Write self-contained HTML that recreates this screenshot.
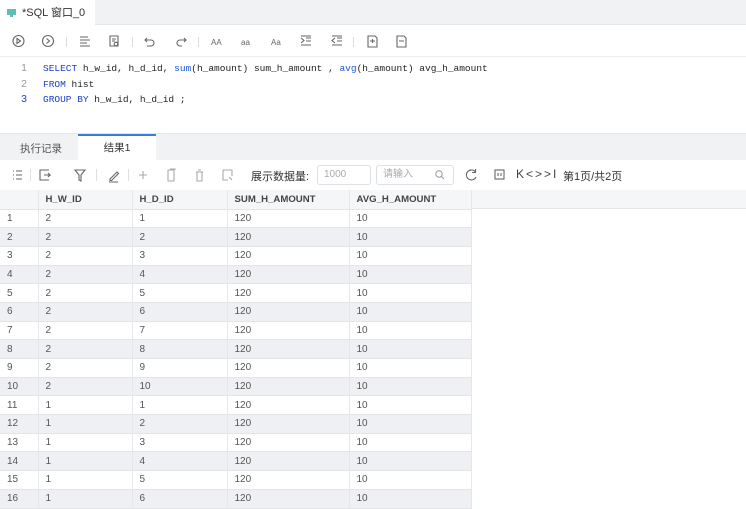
<!DOCTYPE html>
<html><head><meta charset="utf-8">
<style>
*{margin:0;padding:0;box-sizing:border-box}
body{width:746px;height:498px;overflow:hidden;background:#fff;font-family:"Liberation Sans","Noto Sans CJK SC",sans-serif;color:#333;position:relative}
.abs{position:absolute}
.topbar{left:0;top:0;width:746px;height:25px;background:#f1f2f4;border-bottom:1px solid #e6e7ea}
.tab0{left:0;top:0;width:95px;height:26px;background:#fff;font-size:11px;color:#333;line-height:26px;padding-left:22px}
.ico{stroke:#666;fill:none;stroke-width:1.1}
.sep{width:1px;height:10px;background:#ddd;top:37px}
.code{font-family:"Liberation Mono",monospace;font-size:9.5px;color:#222}
.ln{color:#999;font-family:"Liberation Sans",sans-serif;font-size:10.5px;display:inline-block;width:43px;text-align:right;padding-right:16px}
.kw{color:#1c3fcf}.fn{color:#1c55d8}
.panel{left:0;top:133px;width:746px;height:27px;background:#f1f2f4;border-top:1px solid #e3e4e7}
.t1{left:20px;top:141px;font-size:10.5px;color:#555}
.t2{left:78px;top:134px;width:78px;height:27px;background:#fff;border-top:2px solid #3a7be0;font-size:10.5px;color:#333;text-align:center;line-height:24px}
.rtb{top:161px;height:29px;width:746px;left:0;background:#fff}
table{position:absolute;left:0;top:190px;border-collapse:collapse;font-size:10px;color:#555}
td{height:18.7px;padding-left:7px;border-right:1px solid #e6e7ea;border-bottom:1px solid #e3e4e7;white-space:nowrap}
tr.h td{height:19px;background:#f5f6f8;font-weight:bold;color:#444;font-size:9.6px}
tr.g td{background:#eff0f3}
.hdrfill{left:471px;top:190px;width:275px;height:19px;background:#f5f6f8;border-bottom:1px solid #e3e4e7}
</style></head><body>
<div class="abs topbar"></div>
<div class="abs tab0">*SQL 窗口_0</div>
<svg class="abs" style="left:6px;top:8px" width="11" height="10"><rect x="1" y="1" width="9" height="6" fill="#5bbfb8"/><rect x="4" y="7" width="3" height="2" fill="#5bbfb8"/></svg>

<svg class="abs" style="left:0;top:30px" width="420" height="22">
<g class="ico">
<circle cx="18.5" cy="11" r="5.5"/><path d="M17 8.5 L20.5 11 L17 13.5 Z"/>
<circle cx="48" cy="11" r="5.5"/><path d="M46.5 8.5 L49.5 11 L46.5 13.5"/>
<path d="M80 7h8M80 10h10M80 13h7M80 16h10"/>
<path d="M110 6h8v10h-8z M112 9h4M112 11h3"/><circle cx="116" cy="14" r="1.8"/>
<path d="M147 8 L145 10 L147 12 M145 10 h6 a3 3 0 0 1 0 6 h-4"/>
<path d="M184 8 L186 10 L184 12 M186 10 h-6 a3 3 0 0 0 0 6 h2"/>
<path d="M301 8l3 2.5l-3 2.5 M306 8h5M306 11h5M301 15h10M301 6h10"/>
<path d="M335 8l-3 2.5l3 2.5 M337 8h5M337 11h5M332 15h10M332 6h10"/>
<path d="M368 6h7l2 2v9h-9z M370 11h5M372.5 9v4"/>
<path d="M397 6h7l2 2v9h-9z M399 11h5"/>
</g>
<g font-family="Liberation Sans" font-size="8" fill="#666">
<text x="211" y="15">AA</text><text x="241" y="15">aa</text><text x="271" y="15">Aa</text>
</g>
</svg>
<div class="abs sep" style="left:66px"></div>
<div class="abs sep" style="left:132px"></div>
<div class="abs sep" style="left:198px"></div>
<div class="abs sep" style="left:353px"></div>
<div class="abs" style="left:0;top:56px;width:746px;height:1px;background:#eceef0"></div>

<div class="abs code" style="left:0;top:61px;line-height:15.5px">
<div><span class="ln">1</span><span class="kw">SELECT</span>  h_w_id, h_d_id, <span class="fn">sum</span>(h_amount) sum_h_amount , <span class="fn">avg</span>(h_amount) avg_h_amount</div>
<div><span class="ln">2</span><span class="kw">FROM</span> hist</div>
<div><span class="ln" style="color:#1c3fcf">3</span><span class="kw">GROUP BY</span> h_w_id, h_d_id ;</div>
</div>

<div class="abs panel"></div>
<div class="abs t1">执行记录</div>
<div class="abs t2">结果1</div>

<div class="abs rtb"></div>
<svg class="abs" style="left:0;top:165px" width="240" height="20">
<g class="ico" stroke="#777">
<path d="M13 6h1M13 10h1M13 14h1M16 6h6M16 10h6M16 14h6"/>
<path d="M49 5h-9v10h9M44 10h6l-2-2M50 10l-2 2"/>
<path d="M75 5h10l-4 5v6l-2-1v-5z"/>
<path d="M110 14l7-7l1.5 1.5l-7 7h-1.5z M109 17h9"/>
<path d="M143 6v8M139 10h8" stroke="#aaa"/>
<path d="M168 5h6v11h-6z M170 4h5v1" stroke="#aaa"/>
<path d="M196 7h7M197 7v9h5v-9M198 5h3" stroke="#aaa"/>
<path d="M223 5h9v6M223 5v10h5 M229 12l3 3" stroke="#aaa"/>
</g>
<rect x="30" y="4" width="1" height="12" fill="#e0e0e0"/>
<rect x="96" y="4" width="1" height="12" fill="#e0e0e0"/>
<rect x="128" y="4" width="1" height="12" fill="#e0e0e0"/>
</svg>
<div class="abs" style="left:251px;top:168px;font-size:11px;color:#333">展示数据量:</div>
<div class="abs" style="left:317px;top:165px;width:54px;height:20px;border:1px solid #dcdfe6;border-radius:3px;font-size:10px;color:#aaa;line-height:18px;padding-left:6px">1000</div>
<div class="abs" style="left:376px;top:165px;width:78px;height:20px;border:1px solid #dcdfe6;border-radius:3px;font-size:10px;color:#aaa;line-height:18px;padding-left:6px">请输入</div>
<svg class="abs" style="left:434px;top:169px" width="12" height="12"><circle cx="5" cy="5" r="3.2" fill="none" stroke="#999"/><path d="M7.5 7.5l2.5 2.5" stroke="#999"/></svg>
<svg class="abs" style="left:463px;top:167px" width="60" height="16"><g fill="none" stroke="#666" stroke-width="1.1"><path d="M12.5 5a5 5 0 1 0 0.5 5 M12.5 2v3.5h-3.5"/><rect x="32" y="3" width="9" height="9"/><path d="M35 6v3M38 6v3"/></g></svg>
<div class="abs" style="left:516px;top:167px;font-size:12px;color:#444;letter-spacing:2px">K&lt;&gt;&gt;I</div>
<div class="abs" style="left:563px;top:168px;font-size:11px;color:#333">第1页/共2页</div>

<div class="abs hdrfill"></div>
<table>
<colgroup><col style="width:38px"><col style="width:94px"><col style="width:95px"><col style="width:122px"><col style="width:122px"></colgroup>
<tr class="h"><td></td><td>H_W_ID</td><td>H_D_ID</td><td>SUM_H_AMOUNT</td><td>AVG_H_AMOUNT</td></tr>
<tr><td>1</td><td>2</td><td>1</td><td>120</td><td>10</td></tr>
<tr class="g"><td>2</td><td>2</td><td>2</td><td>120</td><td>10</td></tr>
<tr><td>3</td><td>2</td><td>3</td><td>120</td><td>10</td></tr>
<tr class="g"><td>4</td><td>2</td><td>4</td><td>120</td><td>10</td></tr>
<tr><td>5</td><td>2</td><td>5</td><td>120</td><td>10</td></tr>
<tr class="g"><td>6</td><td>2</td><td>6</td><td>120</td><td>10</td></tr>
<tr><td>7</td><td>2</td><td>7</td><td>120</td><td>10</td></tr>
<tr class="g"><td>8</td><td>2</td><td>8</td><td>120</td><td>10</td></tr>
<tr><td>9</td><td>2</td><td>9</td><td>120</td><td>10</td></tr>
<tr class="g"><td>10</td><td>2</td><td>10</td><td>120</td><td>10</td></tr>
<tr><td>11</td><td>1</td><td>1</td><td>120</td><td>10</td></tr>
<tr class="g"><td>12</td><td>1</td><td>2</td><td>120</td><td>10</td></tr>
<tr><td>13</td><td>1</td><td>3</td><td>120</td><td>10</td></tr>
<tr class="g"><td>14</td><td>1</td><td>4</td><td>120</td><td>10</td></tr>
<tr><td>15</td><td>1</td><td>5</td><td>120</td><td>10</td></tr>
<tr class="g"><td>16</td><td>1</td><td>6</td><td>120</td><td>10</td></tr>
</table>
</body></html>
